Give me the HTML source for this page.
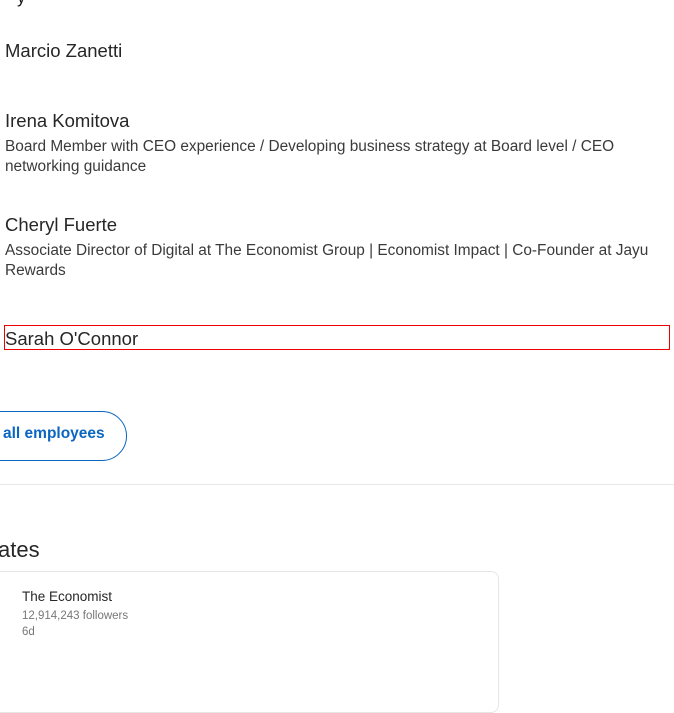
<!DOCTYPE html>
<html><head><style>
body{margin:0;width:674px;height:674px;overflow:hidden;background:#fff;font-family:"Liberation Sans",sans-serif;color:rgba(0,0,0,.9);position:relative}
.a{position:absolute;white-space:nowrap}
.n{font-size:18.5px;color:#262626}
.d{font-size:15.4px;color:#3a3a3a;line-height:20px}
</style></head><body>
<div class="a" style="left:17px;top:-12px;font-size:17px">y</div>
<div class="a n" style="left:5px;top:40px">Marcio Zanetti</div>
<div class="a n" style="left:5px;top:110px">Irena Komitova</div>
<div class="a d" style="left:5px;top:137px">Board Member with CEO experience / Developing business strategy at Board level / CEO<br>networking guidance</div>
<div class="a n" style="left:5px;top:214px">Cheryl Fuerte</div>
<div class="a d" style="left:5px;top:241px">Associate Director of Digital at The Economist Group | Economist Impact | Co-Founder at Jayu<br>Rewards</div>
<div class="a" style="left:4px;top:325px;width:664px;height:23px;border:1px solid #e00"></div>
<div class="a n" style="left:5px;top:328px">Sarah O'Connor</div>
<div class="a" style="left:-60px;top:411px;width:185px;height:48px;border:1px solid #0a66c2;border-radius:25px"></div>
<div class="a" style="left:3px;top:425px;font-size:15.5px;font-weight:bold;color:#0a66c2">all employees</div>
<div class="a" style="left:0;top:484px;width:674px;height:1px;background:#e8e8e8"></div>
<div class="a" style="left:-2px;top:537px;font-size:22px;color:#262626">ates</div>
<div class="a" style="left:-10px;top:571px;width:507px;height:140px;border:1px solid #e6e6e6;border-radius:8px"></div>
<div class="a" style="left:22px;top:589px;font-size:13.5px;color:#262626">The Economist</div>
<div class="a" style="left:22px;top:610px;font-size:11.5px;color:#777">12,914,243 followers</div>
<div class="a" style="left:22px;top:626px;font-size:11.5px;color:#777">6d</div>
</body></html>
